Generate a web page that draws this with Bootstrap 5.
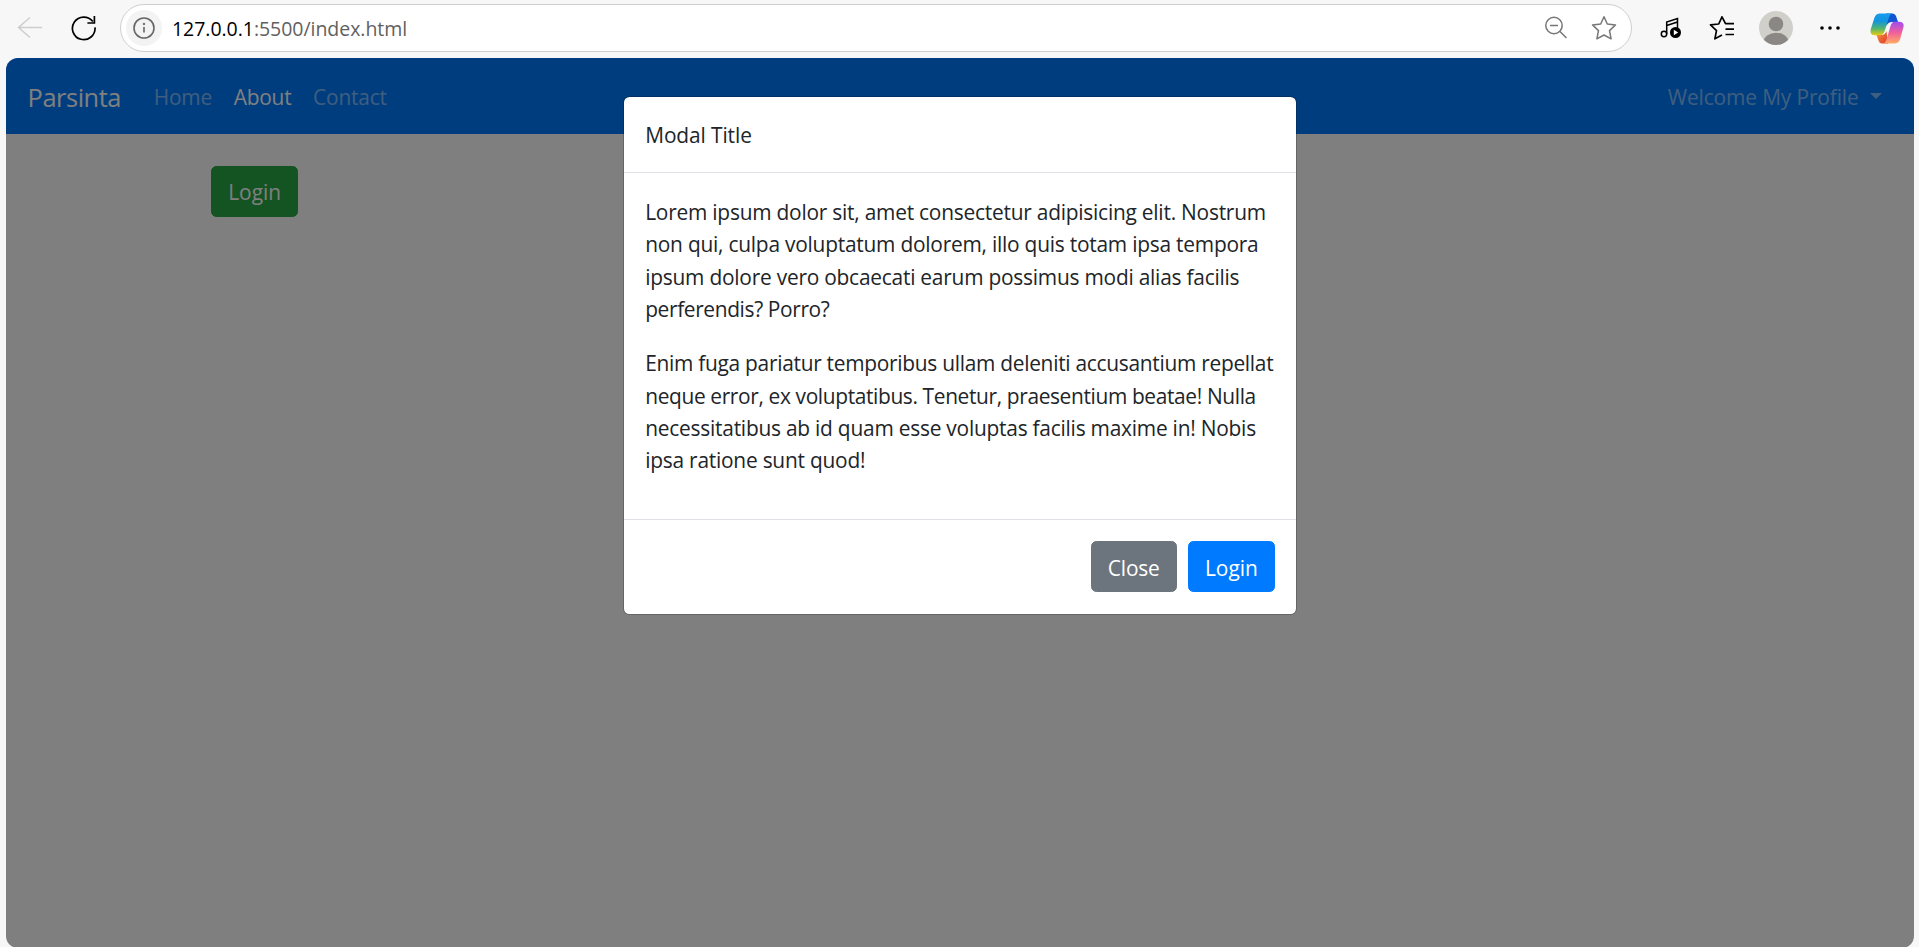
<!DOCTYPE html>
<html lang="en">
<head>
<meta charset="utf-8">
<title>Parsinta</title>
<link href="https://cdn.jsdelivr.net/npm/bootstrap@5.3.0/dist/css/bootstrap.min.css" rel="stylesheet">
<style>
  html { font-size: 21.6px; }
  body { height: 947px; overflow: hidden; background: #f7f7f7; color: #212529; font-family: "Open Sans", "Noto Sans", sans-serif; font-size: 20.9px; line-height: 32.4px; }
  .toolbar { height: 58px; padding: 0 2px 2px 3px; }
  .tool { width: 54px; height: 56px; flex: none; }
  .tool.wide { width: 60px; }
  .tool svg, .address svg { display: block; }
  .address { height: 48px; margin: 0 9px 0 9px; padding: 0 14px 0 5px; background: #fff; border: 1px solid #cfcfcf; border-radius: 24px; gap: 11px; }
  .site-info { width: 36px; height: 36px; background: #f3f3f3; }
  .url { font-size: 19.5px; color: #5f5f5f; padding-top: 2px; margin-left: -1px; letter-spacing: -.04px; }
  .url b { font-weight: 400; color: #000; }
  .bookmark { margin-left: 12px; }
  .viewport { height: 890px; margin: 0 5px 0 6px; border-radius: 12px; overflow: hidden; background: #fff; }
  .navbar { height: 76px; padding: 2px 21.6px 0; background: #007bff; }
  .navbar-brand { font-size: 25.4px; line-height: 40px; padding: 0; margin: 0 22px 0 0; letter-spacing: -.45px; }
  .navbar .nav-link { padding: 0 10.8px; color: rgba(255,255,255,.5); letter-spacing: -.2px; }
  .navbar .nav-link.active { color: #fff; }
  .navbar .dropdown-toggle { letter-spacing: -.12px; }
  .dropdown-toggle::after { margin-left: 11px; vertical-align: 6px; border-top-width: 6.5px; border-left-width: 6.2px; border-right-width: 6.2px; }
  .main-area { width: 1540px; padding: 32px 21px; }
  .btn { --bs-btn-font-size: 20.9px; --bs-btn-line-height: 32.4px; --bs-btn-border-radius: 5.4px; height: 51px; padding: 2px 16.2px 0; border-width: 1px; }
  .btn-success { --bs-btn-bg: #28a745; --bs-btn-border-color: #28a745; }
  .btn-primary { --bs-btn-bg: #007bff; --bs-btn-border-color: #007bff; }
  .btn-secondary { letter-spacing: -.2px; }
  .backdrop { position: absolute; inset: 0; background: rgba(0,0,0,.5); }
  .modal { --bs-modal-padding: 21.6px; --bs-modal-width: 674px; position: absolute; }
  .modal-dialog { margin-top: 38px; }
  .modal-content { border: 1px solid rgba(0,0,0,.2); border-radius: 6.5px; background-clip: padding-box; --bs-modal-inner-border-radius: 5px; color: #212529; }
  .modal-header { height: 76px; padding: 0 21.2px; border-color: #dee2e6; }
  .modal-header h5 { font-size: 20.9px; line-height: 32px; font-weight: 400; letter-spacing: -.1px; }
  .modal-body { height: 346px; flex: none; padding: 23px 21.2px 0; }
  .modal-body p { margin-bottom: 21.6px; white-space: nowrap; letter-spacing: -.23px; }
  .modal-body .snug { letter-spacing: -.36px; }
  .modal-body .close-set { letter-spacing: -.28px; }
  .modal-footer { height: 95px; padding: 21px 21px 22px; gap: 11px; border-color: #dee2e6; }
  .modal-footer > * { margin: 0; }
  .modal-footer .btn { padding-top: 4px; }
</style>
</head>
<body>
<header class="toolbar d-flex align-items-center">
  <div class="tool d-flex align-items-center justify-content-center">
    <svg width="26" height="24" viewBox="0 0 26 24" fill="none" stroke="#cdcdcd" stroke-width="1.5"><path d="M25 11.5H1.500M13 1.500 1.500 11.500 13 21.500"/></svg>
  </div>
  <div class="tool d-flex align-items-center justify-content-center">
    <svg width="26" height="26" viewBox="0 0 26 26" fill="none" stroke="#000" stroke-width="1.7"><path d="M24 12.4A11.3 11.3 0 1 1 21.8 6.6M23.4 1v7h-7"/></svg>
  </div>
  <div class="address d-flex align-items-center flex-grow-1">
    <span class="site-info rounded-circle d-flex align-items-center justify-content-center">
      <svg width="22" height="22" viewBox="0 0 22 22" fill="none" stroke="#666" stroke-width="1.6"><circle cx="11" cy="11" r="10"/><path d="M11 10v5.5"/><circle cx="11" cy="7" r=".4"/></svg>
    </span>
    <span class="url flex-grow-1"><b>127.0.0.1</b>:5500/index.html</span>
    <svg width="24" height="24" viewBox="0 0 24 24" fill="none" stroke="#777" stroke-width="1.5"><circle cx="10" cy="9.5" r="8.2"/><path d="M6 9.5h8M16 15.5l6.500 6.500"/></svg>
    <svg class="bookmark" width="26" height="26" viewBox="0 0 26 26" fill="none" stroke="#777" stroke-width="1.5" stroke-linejoin="round"><path d="M13 1.800 16.300 9l8.200.9-6 5.700 1.600 8.200L13 20l-7.100 3.800 1.600-8.200-6-5.700L9.700 9z"/></svg>
  </div>
  <div class="tool d-flex align-items-center justify-content-center ps-1">
    <svg width="22" height="24" viewBox="0 0 22 24"><g fill="none" stroke="#000" stroke-width="1.500"><circle cx="4" cy="18" r="2.700"/><path d="M6.700 18V6L17.500 2.500V12M6.700 9.500 17.500 6"/></g><circle cx="15.500" cy="16.500" r="5.500"/><path d="M13.800 13.800v5.400l4.400-2.700z" fill="#fff"/></svg>
  </div>
  <div class="tool d-flex align-items-center justify-content-center">
    <svg width="26" height="26" viewBox="0 0 26 26" fill="none" stroke="#000" stroke-width="1.700" stroke-linejoin="round"><path d="M25 8.700h-8.500L13 1.800 9.700 9l-8.200.9 6 5.700-1.600 8.200L13 20M16.500 14.200H25M16.500 19.500H25"/></svg>
  </div>
  <div class="tool d-flex align-items-center justify-content-center">
    <svg width="34" height="34" viewBox="0 0 34 34"><defs><clipPath id="av"><circle cx="17" cy="17" r="17"/></clipPath></defs><g clip-path="url(#av)"><path fill="#d1cfca" d="M0 0h34v34H0z"/><circle cx="17" cy="13" r="7.300" fill="#8b8785"/><ellipse cx="17" cy="31" rx="12.500" ry="9.300" fill="#8b8785"/></g></svg>
  </div>
  <div class="tool d-flex align-items-center justify-content-center">
    <svg width="20" height="4" viewBox="0 0 20 4"><circle cx="2" cy="2" r="1.800"/><circle cx="10" cy="2" r="1.800"/><circle cx="18" cy="2" r="1.800"/></svg>
  </div>
  <div class="tool wide d-flex align-items-center justify-content-center">
    <svg width="34" height="31" viewBox="0 0 34 31">
      <defs>
        <linearGradient id="ca" x1="0" y1="0" x2="0" y2="1"><stop offset="0" stop-color="#199bee"/><stop offset=".35" stop-color="#1294df"/><stop offset=".7" stop-color="#55b56c"/><stop offset="1" stop-color="#e9cc13"/></linearGradient>
        <linearGradient id="cb" x1="0" y1="0" x2="0" y2="1"><stop offset="0" stop-color="#a04df0"/><stop offset=".5" stop-color="#f0609b"/><stop offset="1" stop-color="#ffad62"/></linearGradient>
        <linearGradient id="cc" x1="0" y1="0" x2="1" y2="1"><stop offset="0" stop-color="#0a55cf"/><stop offset="1" stop-color="#1c54d6"/></linearGradient>
        <linearGradient id="cd" x1="0" y1="0" x2="1" y2="1"><stop offset="0" stop-color="#f99a3a"/><stop offset="1" stop-color="#dc3630"/></linearGradient>
      </defs>
      <path fill="url(#cc)" d="M16 .5h6.500q2.700 0 3.500 2.500l2 6h-6q-4 0-5.500 4z"/>
      <path fill="url(#cd)" d="M18 30.500h-6q-2.500 0-3.300-2.500L6.500 22h5q3.500 0 5-4z"/>
      <path fill="url(#ca)" d="M10 .5h12q-2 .5-3 4l-4.500 14Q13.300 22 9.500 22.200H4.500Q-.5 22 .8 16L4.500 4.500Q6 .5 10 .5z"/>
      <path fill="url(#cb)" d="M24.500 8.800h4.500q5.500.2 4.500 5.200L30 26.500q-1.500 4-5.500 4H13.500q2-1 3-4l4-13.500q1.200-4 4-4.200z"/>
    </svg>
  </div>
</header>

<div class="viewport position-relative">
  <nav class="navbar navbar-expand navbar-dark">
    <a class="navbar-brand" href="#">Parsinta</a>
    <ul class="navbar-nav me-auto">
      <li class="nav-item"><a class="nav-link" href="#">Home</a></li>
      <li class="nav-item"><a class="nav-link active" href="#">About</a></li>
      <li class="nav-item"><a class="nav-link" href="#">Contact</a></li>
    </ul>
    <ul class="navbar-nav">
      <li class="nav-item dropdown"><a class="nav-link dropdown-toggle" href="#">Welcome My Profile</a></li>
    </ul>
  </nav>
  <main class="main-area mx-auto">
    <button type="button" class="btn btn-success">Login</button>
  </main>
  <div class="backdrop"></div>
  <div class="modal d-block" tabindex="-1">
    <div class="modal-dialog">
      <div class="modal-content">
        <div class="modal-header"><h5 class="modal-title">Modal Title</h5></div>
        <div class="modal-body">
          <p>Lorem ipsum dolor sit, amet consectetur adipisicing elit. Nostrum<br>non qui, culpa voluptatum dolorem, illo quis totam ipsa tempora<br>ipsum dolore vero obcaecati earum possimus modi alias facilis<br><span class="snug">perferendis? Porro?</span></p>
          <p><span class="close-set">Enim fuga pariatur temporibus ullam deleniti accusantium repellat</span><br><span class="snug">neque error, ex voluptatibus. Tenetur, praesentium beatae! Nulla</span><br>necessitatibus ab id quam esse voluptas facilis maxime in! Nobis<br>ipsa ratione sunt quod!</p>
        </div>
        <div class="modal-footer">
          <button type="button" class="btn btn-secondary">Close</button>
          <button type="button" class="btn btn-primary">Login</button>
        </div>
      </div>
    </div>
  </div>
</div>
<script src="https://cdn.jsdelivr.net/npm/bootstrap@5.3.0/dist/js/bootstrap.bundle.min.js"></script>
</body>
</html>
